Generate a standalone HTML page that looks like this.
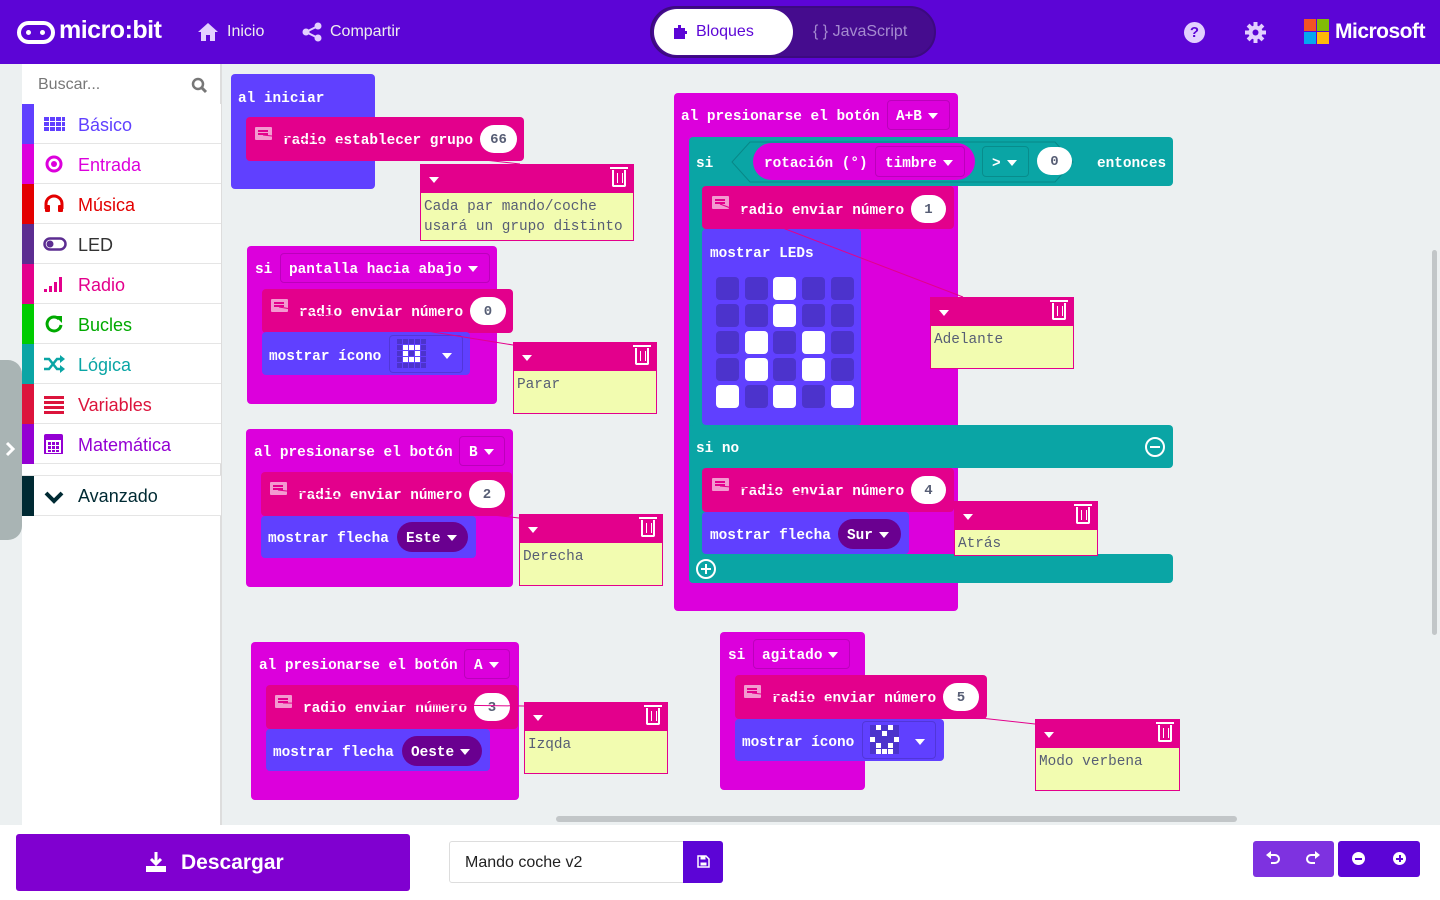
<!DOCTYPE html>
<html><head><meta charset="utf-8"><style>
*{box-sizing:border-box;margin:0;padding:0}
body{width:1440px;height:900px;overflow:hidden;position:relative;background:#ecf0f1;font-family:"Liberation Sans",sans-serif}
.a{position:absolute}
.hdr{left:0;top:0;width:1440px;height:64px;background:#5c05d6;color:#fff}
.blk{position:absolute;border-radius:4px}
.mg{background:#dc00dc}
.rd{background:#e3008c}
.bl{background:#6040ff}
.tl{background:#0aa5a5}
.t{position:absolute;font-family:"Liberation Mono",monospace;font-weight:bold;font-size:14.4px;color:#fff;white-space:pre;line-height:20px;margin-top:2px}
.pill{position:absolute;background:#fff;border-radius:15px;color:#575e75;font-family:"Liberation Mono",monospace;font-weight:bold;font-size:14px;text-align:center;line-height:30px;height:28px}
.dd{position:absolute;border:1px solid rgba(0,0,0,.15);border-radius:4px}
.tri{display:inline-block;width:0;height:0;border-left:5px solid transparent;border-right:5px solid transparent;border-top:6px solid #fff;vertical-align:middle;margin-left:6px}
.cm{position:absolute;border:1px solid #e3008c;background:#f2fcb0}
.cm .h{height:28px;background:#e3008c;position:relative}
.cm .h .tri{position:absolute;left:8px;top:12px;margin:0}
.cm .trash{position:absolute;right:7px;top:5px;width:14px;height:17px;border:2px solid #fff;border-top:none;border-radius:0 0 2px 2px}
.cm .trash:before{content:"";position:absolute;left:-4px;top:-3px;width:18px;height:2px;background:#fff}
.cm .trash:after{content:"";position:absolute;left:3px;top:3px;width:4px;height:10px;border-left:1.5px solid #fff;border-right:1.5px solid #fff}
.cm .b{font-family:"Liberation Mono",monospace;font-size:14.4px;color:#575e75;padding:4px 3px;line-height:20px;white-space:pre}
.ci{position:absolute;width:17px;height:13px;background:#f39ad0;border-radius:1px}
.ci:before{content:"";position:absolute;left:3px;top:3px;width:10px;height:1.5px;background:#e3008c;box-shadow:0 3px 0 #e3008c}
.tb{position:absolute;left:22px;width:199px;height:40px;border-bottom:1px solid #e5e5e5;background:#fff}
.tb .c{position:absolute;left:0;top:0;width:12px;height:40px}
.tb span{position:absolute;left:56px;top:11px;font-size:18px}
.tb svg{position:absolute;left:21px;top:10px}
.led{position:absolute;width:23px;height:23px;border-radius:4px;background:#4c33cc}
.led.on{background:#fff}
.dark{position:absolute;background:#6a0090;border-radius:15px;height:30px}
</style></head><body>
<!-- header -->
<div class="a hdr">
  <div class="a" style="left:17px;top:21px;width:38px;height:23px;border:4px solid #fff;border-radius:12px"></div>
  <div class="a" style="left:26px;top:30px;width:5px;height:5px;background:#fff;border-radius:3px"></div>
  <div class="a" style="left:40px;top:30px;width:5px;height:5px;background:#fff;border-radius:3px"></div>
  <div class="a" style="left:59px;top:16px;font-size:25px;font-weight:bold;letter-spacing:-.5px">micro:bit</div>
  <svg class="a" style="left:197px;top:22px" width="22" height="20" viewBox="0 0 22 20"><path d="M11 1 L1 10 H4 V19 H9 V13 H13 V19 H18 V10 H21 Z" fill="#e3d0ff"/></svg>
  <div class="a" style="left:227px;top:23px;font-size:16px;color:#eee">Inicio</div>
  <svg class="a" style="left:301px;top:22px" width="22" height="20" viewBox="0 0 22 20"><circle cx="17" cy="4" r="3.5" fill="#e3d0ff"/><circle cx="5" cy="10" r="3.5" fill="#e3d0ff"/><circle cx="17" cy="16" r="3.5" fill="#e3d0ff"/><path d="M17 4 L5 10 L17 16" stroke="#e3d0ff" stroke-width="2" fill="none"/></svg>
  <div class="a" style="left:330px;top:23px;font-size:16px;color:#eee">Compartir</div>
  <div class="a" style="left:650px;top:6px;width:286px;height:52px;border-radius:26px;background:#450c8e;border:2px solid #3c0a80"></div>
  <div class="a" style="left:654px;top:9px;width:139px;height:46px;border-radius:23px;background:#fff"></div>
  <svg class="a" style="left:674px;top:24px" width="13" height="15" viewBox="0 0 13 15"><path d="M0 4 H4 V1 H7 V4 H11 V7 H13 V10 H11 V15 H0 Z" fill="#5c05d6"/></svg>
  <div class="a" style="left:696px;top:23px;font-size:16px;color:#5c05d6">Bloques</div>
  <div class="a" style="left:813px;top:23px;font-size:16px;color:#a58bd0">{ } JavaScript</div>
  <div class="a" style="left:1184px;top:22px;width:21px;height:21px;border-radius:11px;background:#e3d0ff;color:#5c05d6;font-weight:bold;font-size:15px;text-align:center;line-height:22px">?</div>
  <svg class="a" style="left:1245px;top:22px" width="21" height="21" viewBox="0 0 21 21"><g fill="#e3d0ff"><circle cx="10.5" cy="10.5" r="7"/><rect x="8.5" y="0" width="4" height="21"/><rect x="0" y="8.5" width="21" height="4"/><rect x="8.5" y="0" width="4" height="21" transform="rotate(45 10.5 10.5)"/><rect x="8.5" y="0" width="4" height="21" transform="rotate(-45 10.5 10.5)"/></g><circle cx="10.5" cy="10.5" r="3" fill="#5c05d6"/></svg>
  <div class="a" style="left:1304px;top:19px;width:12px;height:12px;background:#f35325"></div>
  <div class="a" style="left:1317px;top:19px;width:12px;height:12px;background:#81bc06"></div>
  <div class="a" style="left:1304px;top:32px;width:12px;height:12px;background:#05a6f0"></div>
  <div class="a" style="left:1317px;top:32px;width:12px;height:12px;background:#ffba08"></div>
  <div class="a" style="left:1335px;top:20px;font-size:21px;font-weight:bold;letter-spacing:-.5px">Microsoft</div>
</div>
<!-- toolbox -->
<div class="a" style="left:22px;top:64px;width:199px;height:761px;background:#fff;border-right:1px solid #ddd"></div>
<div class="a" style="left:221px;top:64px;width:1px;height:761px;background:#ddd"></div>
<div class="a" style="left:38px;top:76px;font-size:16px;color:#777">Buscar...</div>
<svg class="a" style="left:191px;top:77px" width="17" height="17" viewBox="0 0 17 17"><circle cx="7" cy="7" r="5" stroke="#777" stroke-width="2.5" fill="none"/><path d="M11 11 L15 15" stroke="#777" stroke-width="3"/></svg>
<div class="tb" style="top:104px"><div class="c" style="background:#6040ff"></div><svg width="22" height="20"><g fill="#6040ff"><rect x="1" y="3" width="5" height="4"/><rect x="7" y="3" width="5" height="4"/><rect x="13" y="3" width="5" height="4"/><rect x="19" y="3" width="3" height="4"/><rect x="1" y="8" width="5" height="4"/><rect x="7" y="8" width="5" height="4"/><rect x="13" y="8" width="5" height="4"/><rect x="19" y="8" width="3" height="4"/><rect x="1" y="13" width="5" height="4"/><rect x="7" y="13" width="5" height="4"/><rect x="13" y="13" width="5" height="4"/><rect x="19" y="13" width="3" height="4"/></g></svg><span style="color:#6040ff">Básico</span></div>
<div class="tb" style="top:144px"><div class="c" style="background:#dc00dc"></div><svg width="22" height="20"><circle cx="11" cy="10" r="7" stroke="#dc00dc" stroke-width="3" fill="none"/><circle cx="11" cy="10" r="3" fill="#dc00dc"/></svg><span style="color:#dc00dc">Entrada</span></div>
<div class="tb" style="top:184px"><div class="c" style="background:#e30000"></div><svg width="22" height="20"><path d="M3 15 V10 A8 8 0 0 1 19 10 V15" stroke="#e30000" stroke-width="3" fill="none"/><rect x="2" y="11" width="5" height="7" rx="1" fill="#e30000"/><rect x="15" y="11" width="5" height="7" rx="1" fill="#e30000"/></svg><span style="color:#e30000">Música</span></div>
<div class="tb" style="top:224px"><div class="c" style="background:#5c2d91"></div><svg width="24" height="20"><rect x="1.5" y="4.5" width="21" height="11" rx="5.5" stroke="#5c2d91" stroke-width="2.5" fill="none"/><circle cx="7" cy="10" r="3.5" fill="#5c2d91"/></svg><span style="color:#333">LED</span></div>
<div class="tb" style="top:264px"><div class="c" style="background:#e3008c"></div><svg width="22" height="20"><g fill="#e3008c"><rect x="1" y="15" width="3" height="3"/><rect x="6" y="12" width="3" height="6"/><rect x="11" y="8" width="3" height="10"/><rect x="16" y="3" width="3" height="15"/></g></svg><span style="color:#e3008c">Radio</span></div>
<div class="tb" style="top:304px"><div class="c" style="background:#00cc00"></div><svg width="22" height="20"><path d="M16 5 A7 7 0 1 0 18 11" stroke="#00aa00" stroke-width="3" fill="none"/><path d="M12 2 H19 V9 Z" fill="#00aa00"/></svg><span style="color:#00aa00">Bucles</span></div>
<div class="tb" style="top:344px"><div class="c" style="background:#0aa5a5"></div><svg width="22" height="20"><path d="M1 5 H6 L14 15 H19 M1 15 H6 L14 5 H19" stroke="#0aa5a5" stroke-width="2.5" fill="none"/><path d="M17 1 L22 5 L17 9 Z M17 11 L22 15 L17 19 Z" fill="#0aa5a5"/></svg><span style="color:#0aa5a5">Lógica</span></div>
<div class="tb" style="top:384px"><div class="c" style="background:#dc143c"></div><svg width="22" height="20"><g fill="#dc143c"><rect x="1" y="2" width="20" height="3"/><rect x="1" y="7" width="20" height="3"/><rect x="1" y="12" width="20" height="3"/><rect x="1" y="17" width="20" height="3"/></g></svg><span style="color:#dc143c">Variables</span></div>
<div class="tb" style="top:424px"><div class="c" style="background:#9400d3"></div><svg width="22" height="20"><rect x="2" y="1" width="17" height="19" rx="1" stroke="#9400d3" stroke-width="2" fill="none"/><rect x="2" y="1" width="17" height="5" fill="#9400d3"/><g fill="#9400d3"><rect x="5" y="8" width="3" height="3"/><rect x="9" y="8" width="3" height="3"/><rect x="13" y="8" width="3" height="3"/><rect x="5" y="12" width="3" height="3"/><rect x="9" y="12" width="3" height="3"/><rect x="13" y="12" width="3" height="3"/><rect x="5" y="16" width="3" height="2"/><rect x="9" y="16" width="3" height="2"/><rect x="13" y="16" width="3" height="2"/></g></svg><span style="color:#9400d3">Matemática</span></div>
<div class="tb" style="top:475px;border-top:1px solid #e5e5e5;height:41px"><div class="c" style="background:#002a33;height:40px"></div><svg width="22" height="20" style="top:11px"><path d="M3 6 L11 14 L19 6" stroke="#002a33" stroke-width="4" fill="none"/></svg><span style="color:#002a33;top:10px">Avanzado</span></div>
<div class="a" style="left:0;top:360px;width:22px;height:180px;background:#a9b4b4;border-radius:0 14px 14px 0"></div>
<svg class="a" style="left:4px;top:441px" width="12" height="16"><path d="M3 2 L9 8 L3 14" stroke="#fff" stroke-width="3" fill="none"/></svg>

<!-- al iniciar -->
<div class="blk bl" style="left:231px;top:74px;width:144px;height:115px"></div>
<div class="t" style="left:238px;top:87px">al iniciar</div>
<div class="blk rd" style="left:246px;top:117px;width:278px;height:44px"></div>
<div class="ci" style="left:255px;top:127px"></div>
<div class="t" style="left:283px;top:129px">radio establecer grupo</div>
<div class="pill" style="left:480px;top:125px;width:37px">66</div>
<div class="cm" style="left:420px;top:164px;width:214px;height:77px"><div class="h"><span class="tri"></span><div class="trash"></div></div><div class="b">Cada par mando/coche
usará un grupo distinto</div></div>

<!-- si pantalla -->
<div class="blk mg" style="left:247px;top:246px;width:250px;height:158px"></div>
<div class="t" style="left:255px;top:258px">si</div>
<div class="dd" style="left:280px;top:253px;width:210px;height:30px"></div>
<div class="t" style="left:289px;top:258px">pantalla hacia abajo<span class="tri"></span></div>
<div class="blk rd" style="left:262px;top:289px;width:251px;height:44px"></div>
<div class="ci" style="left:271px;top:299px"></div>
<div class="t" style="left:299px;top:301px">radio enviar número</div>
<div class="pill" style="left:470px;top:297px;width:36px">0</div>
<div class="blk bl" style="left:262px;top:332px;width:208px;height:43px"></div>
<div class="t" style="left:269px;top:345px">mostrar ícono</div>
<div class="dd" style="left:389px;top:335px;width:74px;height:38px"></div>
<svg class="a" style="left:396px;top:338px" width="32" height="32">
<g fill="#4c33cc">
<rect x="1" y="1" width="5" height="5"/><rect x="7" y="1" width="5" height="5"/><rect x="13" y="1" width="5" height="5"/><rect x="19" y="1" width="5" height="5"/><rect x="25" y="1" width="5" height="5"/>
<rect x="1" y="25" width="5" height="5"/><rect x="7" y="25" width="5" height="5"/><rect x="13" y="25" width="5" height="5"/><rect x="19" y="25" width="5" height="5"/><rect x="25" y="25" width="5" height="5"/>
<rect x="1" y="7" width="5" height="5"/><rect x="1" y="13" width="5" height="5"/><rect x="1" y="19" width="5" height="5"/><rect x="25" y="7" width="5" height="5"/><rect x="25" y="13" width="5" height="5"/><rect x="25" y="19" width="5" height="5"/><rect x="13" y="13" width="5" height="5"/></g>
<g fill="#fff"><rect x="7" y="7" width="5" height="5"/><rect x="13" y="7" width="5" height="5"/><rect x="19" y="7" width="5" height="5"/><rect x="7" y="13" width="5" height="5"/><rect x="19" y="13" width="5" height="5"/><rect x="7" y="19" width="5" height="5"/><rect x="13" y="19" width="5" height="5"/><rect x="19" y="19" width="5" height="5"/></g></svg>
<div class="t" style="left:436px;top:345px"><span class="tri"></span></div>
<div class="cm" style="left:513px;top:342px;width:144px;height:72px"><div class="h"><span class="tri"></span><div class="trash"></div></div><div class="b">Parar</div></div>

<!-- boton B -->
<div class="blk mg" style="left:246px;top:429px;width:267px;height:158px"></div>
<div class="t" style="left:254px;top:441px">al presionarse el botón</div>
<div class="dd" style="left:459px;top:436px;width:46px;height:30px"></div>
<div class="t" style="left:469px;top:441px">B<span class="tri"></span></div>
<div class="blk rd" style="left:261px;top:472px;width:251px;height:44px"></div>
<div class="ci" style="left:270px;top:482px"></div>
<div class="t" style="left:298px;top:484px">radio enviar número</div>
<div class="pill" style="left:469px;top:480px;width:36px">2</div>
<div class="blk bl" style="left:261px;top:516px;width:215px;height:42px"></div>
<div class="t" style="left:268px;top:527px">mostrar flecha</div>
<div class="dark" style="left:397px;top:522px;width:71px"></div>
<div class="t" style="left:406px;top:527px">Este<span class="tri"></span></div>
<div class="cm" style="left:519px;top:514px;width:144px;height:72px"><div class="h"><span class="tri"></span><div class="trash"></div></div><div class="b">Derecha</div></div>

<!-- boton A -->
<div class="blk mg" style="left:251px;top:642px;width:268px;height:158px"></div>
<div class="t" style="left:259px;top:654px">al presionarse el botón</div>
<div class="dd" style="left:464px;top:649px;width:46px;height:30px"></div>
<div class="t" style="left:474px;top:654px">A<span class="tri"></span></div>
<div class="blk rd" style="left:266px;top:685px;width:252px;height:44px"></div>
<div class="ci" style="left:275px;top:695px"></div>
<div class="t" style="left:303px;top:697px">radio enviar número</div>
<div class="pill" style="left:474px;top:693px;width:36px">3</div>
<div class="blk bl" style="left:266px;top:729px;width:224px;height:42px"></div>
<div class="t" style="left:273px;top:741px">mostrar flecha</div>
<div class="dark" style="left:402px;top:736px;width:80px"></div>
<div class="t" style="left:411px;top:741px">Oeste<span class="tri"></span></div>
<div class="cm" style="left:524px;top:702px;width:144px;height:72px"><div class="h"><span class="tri"></span><div class="trash"></div></div><div class="b">Izqda</div></div>

<!-- si agitado -->
<div class="blk mg" style="left:720px;top:632px;width:145px;height:158px"></div>
<div class="t" style="left:728px;top:644px">si</div>
<div class="dd" style="left:753px;top:639px;width:97px;height:30px"></div>
<div class="t" style="left:762px;top:644px">agitado<span class="tri"></span></div>
<div class="blk rd" style="left:735px;top:675px;width:252px;height:44px"></div>
<div class="ci" style="left:744px;top:685px"></div>
<div class="t" style="left:772px;top:687px">radio enviar número</div>
<div class="pill" style="left:943px;top:683px;width:36px">5</div>
<div class="blk bl" style="left:735px;top:719px;width:209px;height:42px"></div>
<div class="t" style="left:742px;top:731px">mostrar ícono</div>
<div class="dd" style="left:862px;top:721px;width:74px;height:38px"></div>
<svg class="a" style="left:869px;top:724px" width="32" height="32"><g fill="#4c33cc"><rect x="1" y="1" width="29" height="29"/></g>
<g fill="#fff"><rect x="7" y="1" width="5" height="5"/><rect x="19" y="1" width="5" height="5"/><rect x="1" y="13" width="5" height="5"/><rect x="25" y="13" width="5" height="5"/><rect x="7" y="19" width="5" height="5"/><rect x="19" y="19" width="5" height="5"/><rect x="7" y="25" width="5" height="5"/><rect x="13" y="25" width="5" height="5"/><rect x="19" y="25" width="5" height="5"/><rect x="13" y="7" width="5" height="5"/></g></svg>
<div class="t" style="left:909px;top:731px"><span class="tri"></span></div>
<div class="cm" style="left:1035px;top:719px;width:145px;height:72px"><div class="h"><span class="tri"></span><div class="trash"></div></div><div class="b">Modo verbena</div></div>

<!-- A+B big -->
<div class="blk mg" style="left:674px;top:93px;width:284px;height:518px"></div>
<div class="t" style="left:681px;top:105px">al presionarse el botón</div>
<div class="dd" style="left:887px;top:100px;width:63px;height:30px"></div>
<div class="t" style="left:896px;top:105px">A+B<span class="tri"></span></div>
<div class="blk tl" style="left:689px;top:137px;width:484px;height:49px"></div>
<div class="a" style="left:689px;top:180px;width:27px;height:250px;background:#0aa5a5"></div>
<div class="blk tl" style="left:689px;top:425px;width:484px;height:43px"></div>
<div class="a" style="left:689px;top:460px;width:27px;height:100px;background:#0aa5a5"></div>
<div class="blk tl" style="left:689px;top:554px;width:484px;height:29px"></div>
<div class="t" style="left:696px;top:152px">si</div>
<svg class="a" style="left:730px;top:140px" width="345" height="44"><path d="M20 2 H325 L343 22 L325 42 H20 L2 22 Z" fill="none" stroke="rgba(0,0,0,.18)"/></svg>
<div class="a" style="left:753px;top:143px;width:222px;height:37px;background:#dc00dc;border-radius:19px"></div>
<div class="dd" style="left:875px;top:146px;width:90px;height:31px"></div>
<div class="t" style="left:764px;top:152px">rotación (°)</div>
<div class="t" style="left:885px;top:152px">timbre<span class="tri"></span></div>
<div class="dd" style="left:982px;top:146px;width:47px;height:31px"></div>
<div class="t" style="left:992px;top:152px">&gt;<span class="tri"></span></div>
<div class="pill" style="left:1037px;top:147px;width:35px">0</div>
<div class="t" style="left:1097px;top:152px">entonces</div>
<div class="blk rd" style="left:702px;top:186px;width:252px;height:43px"></div>
<div class="ci" style="left:712px;top:196px"></div>
<div class="t" style="left:740px;top:199px">radio enviar número</div>
<div class="pill" style="left:911px;top:195px;width:35px">1</div>
<div class="blk bl" style="left:702px;top:229px;width:159px;height:196px"></div>
<div class="t" style="left:710px;top:242px">mostrar LEDs</div>
<div class="t" style="left:696px;top:437px">si no</div>
<div class="a" style="left:1145px;top:437px;width:20px;height:20px;border:2px solid #fff;border-radius:10px"><div class="a" style="left:3px;top:7px;width:10px;height:2px;background:#fff"></div></div>
<div class="blk rd" style="left:702px;top:468px;width:252px;height:44px"></div>
<div class="ci" style="left:712px;top:478px"></div>
<div class="t" style="left:740px;top:480px">radio enviar número</div>
<div class="pill" style="left:911px;top:476px;width:35px">4</div>
<div class="blk bl" style="left:702px;top:512px;width:207px;height:42px"></div>
<div class="t" style="left:710px;top:524px">mostrar flecha</div>
<div class="dark" style="left:838px;top:519px;width:63px"></div>
<div class="t" style="left:847px;top:524px">Sur<span class="tri"></span></div>
<div class="a" style="left:696px;top:559px;width:20px;height:20px;border:2px solid #fff;border-radius:10px"><div class="a" style="left:3px;top:7px;width:10px;height:2px;background:#fff"></div><div class="a" style="left:7px;top:3px;width:2px;height:10px;background:#fff"></div></div>
<div class="cm" style="left:930px;top:297px;width:144px;height:72px"><div class="h"><span class="tri"></span><div class="trash"></div></div><div class="b">Adelante</div></div>
<div class="cm" style="left:954px;top:501px;width:144px;height:55px"><div class="h"><span class="tri"></span><div class="trash"></div></div><div class="b">Atrás</div></div>

<!-- LEDs -->
<div class="led" style="left:716px;top:277px"></div><div class="led" style="left:745px;top:277px"></div><div class="led on" style="left:773px;top:277px"></div><div class="led" style="left:802px;top:277px"></div><div class="led" style="left:831px;top:277px"></div>
<div class="led" style="left:716px;top:304px"></div><div class="led" style="left:745px;top:304px"></div><div class="led on" style="left:773px;top:304px"></div><div class="led" style="left:802px;top:304px"></div><div class="led" style="left:831px;top:304px"></div>
<div class="led" style="left:716px;top:331px"></div><div class="led on" style="left:745px;top:331px"></div><div class="led" style="left:773px;top:331px"></div><div class="led on" style="left:802px;top:331px"></div><div class="led" style="left:831px;top:331px"></div>
<div class="led" style="left:716px;top:358px"></div><div class="led on" style="left:745px;top:358px"></div><div class="led" style="left:773px;top:358px"></div><div class="led on" style="left:802px;top:358px"></div><div class="led" style="left:831px;top:358px"></div>
<div class="led on" style="left:716px;top:385px"></div><div class="led" style="left:745px;top:385px"></div><div class="led on" style="left:773px;top:385px"></div><div class="led" style="left:802px;top:385px"></div><div class="led on" style="left:831px;top:385px"></div>

<!-- comment lines -->
<svg class="a" style="left:0;top:0" width="1440" height="900"><g stroke="#e3008c" stroke-width="1">
<line x1="263" y1="135" x2="520" y2="164"/><line x1="279" y1="307" x2="513" y2="345"/><line x1="278" y1="490" x2="519" y2="518"/>
<line x1="283" y1="703" x2="524" y2="706"/><line x1="752" y1="693" x2="1035" y2="724"/><line x1="720" y1="204" x2="963" y2="297"/><line x1="720" y1="486" x2="954" y2="508"/></g></svg>

<!-- scrollbars -->
<div class="a" style="left:556px;top:816px;width:681px;height:6px;background:#c2c6c8;border-radius:3px"></div>
<div class="a" style="left:1432px;top:250px;width:5px;height:385px;background:#c2c6c8;border-radius:3px"></div>

<!-- bottom bar -->
<div class="a" style="left:0;top:825px;width:1440px;height:75px;background:#fff"></div>
<div class="a" style="left:16px;top:834px;width:394px;height:57px;background:#8000d0;border-radius:3px"></div>
<svg class="a" style="left:145px;top:851px" width="22" height="22"><path d="M11 1 V12 M6 8 L11 13 L16 8" stroke="#fff" stroke-width="3" fill="none"/><rect x="1" y="15" width="20" height="6" fill="#fff"/></svg>
<div class="a" style="left:181px;top:851px;font-size:21px;font-weight:bold;color:#fff">Descargar</div>
<div class="a" style="left:449px;top:841px;width:236px;height:42px;border:1px solid #ddd;border-radius:3px 0 0 3px"></div>
<div class="a" style="left:465px;top:854px;font-size:16px;color:#222">Mando coche v2</div>
<div class="a" style="left:683px;top:841px;width:40px;height:42px;background:#5c05d6;border-radius:0 3px 3px 0"></div>
<svg class="a" style="left:697px;top:855px" width="13" height="13"><path d="M1 1 H9 L12 4 V12 H1 Z" stroke="#fff" stroke-width="1.5" fill="none"/><rect x="3.5" y="1" width="5" height="3.5" fill="#fff"/><rect x="3.5" y="7.5" width="6" height="3" fill="#fff"/></svg>
<div class="a" style="left:1253px;top:841px;width:81px;height:36px;background:#7e32e0;border-radius:3px"></div>
<svg class="a" style="left:1265px;top:851px" width="16" height="14"><path d="M4 4 H10 A4 4 0 0 1 10 12 H6" stroke="#fff" stroke-width="2" fill="none"/><path d="M1 4 L6 0 V8 Z" fill="#fff"/></svg>
<svg class="a" style="left:1305px;top:851px" width="16" height="14"><path d="M12 4 H6 A4 4 0 0 0 6 12 H10" stroke="#fff" stroke-width="2" fill="none"/><path d="M15 4 L10 0 V8 Z" fill="#fff"/></svg>
<div class="a" style="left:1338px;top:841px;width:82px;height:36px;background:#5c05d6;border-radius:3px"></div>
<div class="a" style="left:1352px;top:852px;width:13px;height:13px;background:#fff;border-radius:7px"><div class="a" style="left:3px;top:5.5px;width:7px;height:2px;background:#5c05d6"></div></div>
<div class="a" style="left:1393px;top:852px;width:13px;height:13px;background:#fff;border-radius:7px"><div class="a" style="left:3px;top:5.5px;width:7px;height:2px;background:#5c05d6"></div><div class="a" style="left:5.5px;top:3px;width:2px;height:7px;background:#5c05d6"></div></div>
</body></html>
